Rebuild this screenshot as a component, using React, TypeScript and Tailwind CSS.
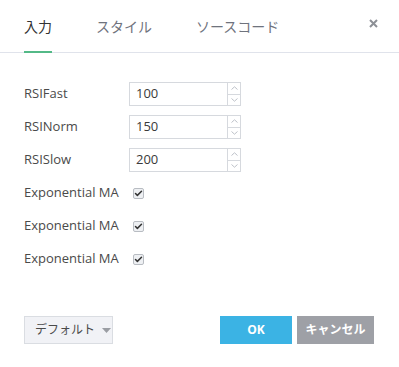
import { Check } from 'lucide-react';

const font = { fontFamily: '"Open Sans", "Noto Sans CJK JP", sans-serif' };

function NumberField({ value }: { value: string }) {
  return (
    <div className="flex h-6 w-[112px] border border-[#d6d9de] bg-white">
      <div className="flex flex-1 items-center pl-[6px] text-[13px] text-[#3a3a3a]">{value}</div>
      <div className="flex w-[13px] flex-col border-l border-[#d6d9de]">
        <div className="flex flex-1 items-center justify-center border-b border-[#d6d9de]">
          <svg width="7" height="4" viewBox="0 0 7 4"><path d="M0.5 3.5 L3.5 0.8 L6.5 3.5" fill="none" stroke="#b5bac2" strokeWidth="0.9" /></svg>
        </div>
        <div className="flex flex-1 items-center justify-center">
          <svg width="7" height="4" viewBox="0 0 7 4"><path d="M0.5 0.5 L3.5 3.2 L6.5 0.5" fill="none" stroke="#b5bac2" strokeWidth="0.9" /></svg>
        </div>
      </div>
    </div>
  );
}

function CheckRow({ label }: { label: string }) {
  return (
    <div className="flex h-6 items-center">
      <span className="w-[109px] text-[13px] text-[#4a4a4a]">{label}</span>
      <span className="flex h-[11px] w-[11px] items-center justify-center rounded-[2px] border border-[#b8bcc2] bg-[#eef0f3]">
        <Check className="h-[9px] w-[9px] text-[#333]" strokeWidth={4} />
      </span>
    </div>
  );
}

export default function App() {
  const inputs = [
    { label: 'RSIFast', value: '100' },
    { label: 'RSINorm', value: '150' },
    { label: 'RSISlow', value: '200' },
  ];

  return (
    <div className="flex h-[367px] w-[399px] flex-col bg-white" style={font}>
      <header className="relative flex h-[53px] items-end border-b border-[#e0e3eb] pl-6">
        <div className="flex gap-[44px]">
          <div className="-mb-px border-b-2 border-[#53b987] pb-[14px] text-[14px] leading-[18px] text-[#333]">入力</div>
          <div className="pb-[16px] text-[14px] leading-[18px] text-[#6f737d]">スタイル</div>
          <div className="pb-[16px] text-[14px] leading-[18px] text-[#6f737d]">ソースコード</div>
        </div>
        <svg className="absolute right-[21px] top-[19px]" width="9" height="9" viewBox="0 0 9 9">
          <path d="M1 1 L8 8 M8 1 L1 8" stroke="#8d9096" strokeWidth="2" />
        </svg>
      </header>

      <main className="flex flex-1 flex-col gap-[9px] pl-6 pt-[29px]">
        {inputs.map((row) => (
          <div key={row.label} className="flex h-6 items-center">
            <span className="w-[105px] text-[13px] text-[#4a4a4a]">{row.label}</span>
            <NumberField value={row.value} />
          </div>
        ))}
        <CheckRow label="Exponential MA" />
        <CheckRow label="Exponential MA" />
        <CheckRow label="Exponential MA" />
      </main>

      <footer className="flex items-center justify-between pb-[23px] pl-6 pr-[25px]">
        <button className="flex h-7 w-[89px] items-center gap-[7px] whitespace-nowrap border border-[#dadde2] bg-[#f1f2f6] pl-[10px] text-[12px] text-[#4a4a4a]">
          デフォルト
          <svg width="9" height="5" viewBox="0 0 9 5"><path d="M0 0 H9 L4.5 5 Z" fill="#9a9da3" /></svg>
        </button>
        <div className="flex gap-[5px]">
          <button className="h-7 w-[72px] bg-[#3bb3e4] text-[12px] font-bold text-white">OK</button>
          <button className="h-7 w-[77px] whitespace-nowrap bg-[#9ea0a6] text-[12px] font-bold text-white">キャンセル</button>
        </div>
      </footer>
    </div>
  );
}
